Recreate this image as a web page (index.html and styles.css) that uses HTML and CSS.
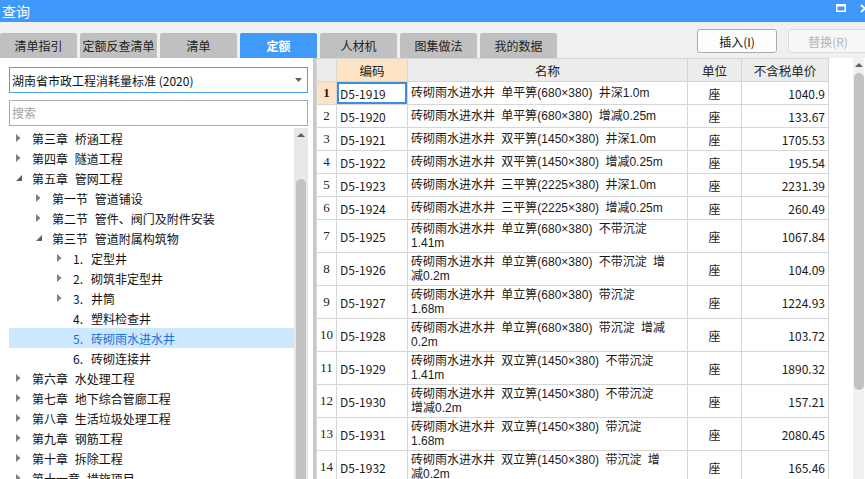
FILE: index.html
```html
<!DOCTYPE html>
<html lang="zh-CN">
<head>
<meta charset="utf-8">
<title>查询</title>
<link rel="stylesheet" href="styles.css">
</head>
<body>
<div class="titlebar">
  <span class="title">查询</span>
  <div class="winbtns">
    <svg width="10" height="8" viewBox="0 0 10 8"><rect x="0.75" y="0.75" width="8.5" height="6.5" fill="none" stroke="#fff" stroke-width="1.5"/><rect x="0" y="0" width="10" height="2.5" fill="#fff"/></svg>
    <svg width="10" height="9" viewBox="0 0 10 9"><path d="M1 1L9 8M9 1L1 8" stroke="#fff" stroke-width="2"/></svg>
  </div>
</div>
<div class="toolbar">
  <div class="tabs">
    <div class="tab">清单指引</div>
    <div class="tab">定额反查清单</div>
    <div class="tab">清单</div>
    <div class="tab active">定额</div>
    <div class="tab">人材机</div>
    <div class="tab">图集做法</div>
    <div class="tab">我的数据</div>
  </div>
  <div class="actions">
    <button class="btn">插入(I)</button>
    <button class="btn disabled">替换(R)</button>
  </div>
</div>
<div class="main">
  <div class="left">
    <div class="select"><span>湖南省市政工程消耗量标准 (2020)</span><svg width="7" height="4" viewBox="0 0 7 4"><path d="M0 0H7L3.5 4Z" fill="#606060"/></svg></div>
    <div class="search">搜索</div>
    <div class="tree-wrap">
      <div class="tree">
        <div class="node"><span class="tw"><svg class="col" width="5" height="8" viewBox="0 0 5 8"><path d="M0 0L4.5 4L0 8Z" fill="#808080"/></svg></span>第三章&nbsp;桥涵工程</div>
        <div class="node"><span class="tw"><svg class="col" width="5" height="8" viewBox="0 0 5 8"><path d="M0 0L4.5 4L0 8Z" fill="#808080"/></svg></span>第四章&nbsp;隧道工程</div>
        <div class="node"><span class="tw"><svg class="exp" width="6" height="6" viewBox="0 0 6 6"><path d="M6 0V6H0Z" fill="#606060"/></svg></span>第五章&nbsp;管网工程</div>
        <div class="node l1"><span class="tw"><svg class="col" width="5" height="8" viewBox="0 0 5 8"><path d="M0 0L4.5 4L0 8Z" fill="#808080"/></svg></span>第一节&nbsp;管道铺设</div>
        <div class="node l1"><span class="tw"><svg class="col" width="5" height="8" viewBox="0 0 5 8"><path d="M0 0L4.5 4L0 8Z" fill="#808080"/></svg></span>第二节&nbsp;管件、阀门及附件安装</div>
        <div class="node l1"><span class="tw"><svg class="exp" width="6" height="6" viewBox="0 0 6 6"><path d="M6 0V6H0Z" fill="#606060"/></svg></span>第三节&nbsp;管道附属构筑物</div>
        <div class="node l2"><span class="tw"><svg class="col" width="5" height="8" viewBox="0 0 5 8"><path d="M0 0L4.5 4L0 8Z" fill="#808080"/></svg></span><span class="no">1.</span>定型井</div>
        <div class="node l2"><span class="tw"><svg class="col" width="5" height="8" viewBox="0 0 5 8"><path d="M0 0L4.5 4L0 8Z" fill="#808080"/></svg></span><span class="no">2.</span>砌筑非定型井</div>
        <div class="node l2"><span class="tw"><svg class="col" width="5" height="8" viewBox="0 0 5 8"><path d="M0 0L4.5 4L0 8Z" fill="#808080"/></svg></span><span class="no">3.</span>井筒</div>
        <div class="node l2"><span class="tw"></span><span class="no">4.</span>塑料检查井</div>
        <div class="node l2 selected"><span class="tw"></span><span class="no">5.</span>砖砌雨水进水井</div>
        <div class="node l2"><span class="tw"></span><span class="no">6.</span>砖砌连接井</div>
        <div class="node"><span class="tw"><svg class="col" width="5" height="8" viewBox="0 0 5 8"><path d="M0 0L4.5 4L0 8Z" fill="#808080"/></svg></span>第六章&nbsp;水处理工程</div>
        <div class="node"><span class="tw"><svg class="col" width="5" height="8" viewBox="0 0 5 8"><path d="M0 0L4.5 4L0 8Z" fill="#808080"/></svg></span>第七章&nbsp;地下综合管廊工程</div>
        <div class="node"><span class="tw"><svg class="col" width="5" height="8" viewBox="0 0 5 8"><path d="M0 0L4.5 4L0 8Z" fill="#808080"/></svg></span>第八章&nbsp;生活垃圾处理工程</div>
        <div class="node"><span class="tw"><svg class="col" width="5" height="8" viewBox="0 0 5 8"><path d="M0 0L4.5 4L0 8Z" fill="#808080"/></svg></span>第九章&nbsp;钢筋工程</div>
        <div class="node"><span class="tw"><svg class="col" width="5" height="8" viewBox="0 0 5 8"><path d="M0 0L4.5 4L0 8Z" fill="#808080"/></svg></span>第十章&nbsp;拆除工程</div>
        <div class="node"><span class="tw"><svg class="col" width="5" height="8" viewBox="0 0 5 8"><path d="M0 0L4.5 4L0 8Z" fill="#808080"/></svg></span>第十一章&nbsp;措施项目</div>
      </div>
      <div class="vbar tree-bar">
        <svg class="up" width="8" height="4" viewBox="0 0 8 4"><path d="M0 4H8L4 0Z" fill="#606060"/></svg>
        <div class="thumb tree-thumb"></div>
      </div>
    </div>
  </div>
  <div class="right">
    <table class="grid">
      <colgroup>
        <col class="c-num"><col class="c-code"><col class="c-name"><col class="c-unit"><col class="c-price">
      </colgroup>
      <thead>
        <tr><th></th><th class="cur">编码</th><th>名称</th><th>单位</th><th>不含税单价</th></tr>
      </thead>
      <tbody>
        <tr class="s"><td class="num sel">1</td><td class="code focus">D5-1919</td><td class="name">砖砌雨水进水井 单平箅(680×380) 井深1.0m</td><td class="unit">座</td><td class="price">1040.9</td></tr>
        <tr class="s"><td class="num">2</td><td class="code">D5-1920</td><td class="name">砖砌雨水进水井 单平箅(680×380) 增减0.25m</td><td class="unit">座</td><td class="price">133.67</td></tr>
        <tr class="s"><td class="num">3</td><td class="code">D5-1921</td><td class="name">砖砌雨水进水井 双平箅(1450×380) 井深1.0m</td><td class="unit">座</td><td class="price">1705.53</td></tr>
        <tr class="s"><td class="num">4</td><td class="code">D5-1922</td><td class="name">砖砌雨水进水井 双平箅(1450×380) 增减0.25m</td><td class="unit">座</td><td class="price">195.54</td></tr>
        <tr class="s"><td class="num">5</td><td class="code">D5-1923</td><td class="name">砖砌雨水进水井 三平箅(2225×380) 井深1.0m</td><td class="unit">座</td><td class="price">2231.39</td></tr>
        <tr class="s"><td class="num">6</td><td class="code">D5-1924</td><td class="name">砖砌雨水进水井 三平箅(2225×380) 增减0.25m</td><td class="unit">座</td><td class="price">260.49</td></tr>
        <tr class="d"><td class="num">7</td><td class="code">D5-1925</td><td class="name">砖砌雨水进水井 单立箅(680×380) 不带沉淀<br>1.41m</td><td class="unit">座</td><td class="price">1067.84</td></tr>
        <tr class="d"><td class="num">8</td><td class="code">D5-1926</td><td class="name">砖砌雨水进水井 单立箅(680×380) 不带沉淀 增<br>减0.2m</td><td class="unit">座</td><td class="price">104.09</td></tr>
        <tr class="d"><td class="num">9</td><td class="code">D5-1927</td><td class="name">砖砌雨水进水井 单立箅(680×380) 带沉淀<br>1.68m</td><td class="unit">座</td><td class="price">1224.93</td></tr>
        <tr class="d"><td class="num">10</td><td class="code">D5-1928</td><td class="name">砖砌雨水进水井 单立箅(680×380) 带沉淀 增减<br>0.2m</td><td class="unit">座</td><td class="price">103.72</td></tr>
        <tr class="d"><td class="num">11</td><td class="code">D5-1929</td><td class="name">砖砌雨水进水井 双立箅(1450×380) 不带沉淀<br>1.41m</td><td class="unit">座</td><td class="price">1890.32</td></tr>
        <tr class="d"><td class="num">12</td><td class="code">D5-1930</td><td class="name">砖砌雨水进水井 双立箅(1450×380) 不带沉淀<br>增减0.2m</td><td class="unit">座</td><td class="price">157.21</td></tr>
        <tr class="d"><td class="num">13</td><td class="code">D5-1931</td><td class="name">砖砌雨水进水井 双立箅(1450×380) 带沉淀<br>1.68m</td><td class="unit">座</td><td class="price">2080.45</td></tr>
        <tr class="d"><td class="num">14</td><td class="code">D5-1932</td><td class="name">砖砌雨水进水井 双立箅(1450×380) 带沉淀 增<br>减0.2m</td><td class="unit">座</td><td class="price">165.46</td></tr>
      </tbody>
    </table>
    <div class="vbar grid-bar">
      <svg class="up" width="8" height="4" viewBox="0 0 8 4"><path d="M0 4H8L4 0Z" fill="#606060"/></svg>
      <div class="thumb grid-thumb"></div>
    </div>
  </div>
</div>
</body>
</html>
```
FILE: styles.css
```css
html, body {
  margin: 0;
  padding: 0;
}
body {
  width: 865px;
  height: 479px;
  overflow: hidden;
  background: #f0f0f0;
  font-family: "Noto Sans CJK SC", "Liberation Sans", sans-serif;
  font-size: 12px;
  color: #1a1a1a;
}

/* title bar */
.titlebar {
  height: 22px;
  background: #4099fa;
  color: #fff;
  display: flex;
  align-items: center;
  justify-content: space-between;
}
.title {
  font-size: 14px;
  line-height: 22px;
  padding-left: 2px;
}
.winbtns {
  display: flex;
  align-items: center;
  gap: 14px;
  margin-right: -5px;
  padding-bottom: 6px;
}
.winbtns svg {
  display: block;
}

/* toolbar with tabs */
.toolbar {
  height: 36px;
  display: flex;
  justify-content: space-between;
}
.tabs {
  display: flex;
  align-items: flex-end;
  gap: 3px;
}
.tab {
  width: 77px;
  height: 25px;
  background: #c0c0c0;
  border-radius: 2px 2px 0 0;
  display: flex;
  align-items: center;
  justify-content: center;
  font-size: 12px;
  color: #222;
}
.tab.active {
  background: #409afa;
  color: #fff;
  font-weight: bold;
}
.actions {
  display: flex;
  align-items: flex-start;
  gap: 11px;
  margin-top: 7px;
  margin-right: -3px;
}
.btn {
  width: 80px;
  height: 24px;
  padding: 0;
  border: 1px solid #acacac;
  border-radius: 3px;
  background: #fdfdfd;
  font-family: inherit;
  font-size: 12px;
  color: #111;
}
.btn.disabled {
  border-color: #dcdcdc;
  background: #f7f7f7;
  color: #b4b4b4;
}

/* main area */
.main {
  display: flex;
  height: 421px;
}
.left {
  flex: none;
  width: 316px;
  box-sizing: border-box;
  background: #fff;
  border-right: 3px solid #c9c9c9;
  padding: 9px 5px 0 9px;
  display: flex;
  flex-direction: column;
}
.select {
  height: 26px;
  box-sizing: border-box;
  border: 1px solid #4a9ef5;
  display: flex;
  align-items: center;
  justify-content: space-between;
  padding: 0 5px 0 2px;
  color: #111;
}
.select svg {
  display: block;
}
.search {
  height: 26px;
  box-sizing: border-box;
  margin-top: 7px;
  border: 1px solid #ababab;
  color: #a3a3a3;
  padding-left: 2px;
  line-height: 24px;
}
.tree-wrap {
  margin-top: 2px;
  flex: 1;
  display: flex;
  overflow: hidden;
}
.tree {
  flex: 1;
  overflow: hidden;
}
.node {
  height: 20px;
  display: flex;
  align-items: center;
  white-space: nowrap;
  font-size: 12px;
  color: #111;
  word-spacing: 4px;
}
.node.l1 {
  padding-left: 20px;
}
.node.l2 {
  padding-left: 41px;
}
.node.selected {
  background: #cce8ff;
  color: #1b6fd8;
}
.tw {
  width: 23px;
  flex: none;
  display: flex;
  align-items: center;
  padding-left: 7px;
  box-sizing: border-box;
}
.tw svg {
  display: block;
}
.no {
  width: 18px;
  flex: none;
}

/* scrollbars */
.vbar {
  display: flex;
  flex-direction: column;
  align-items: center;
  flex: none;
}
.vbar .up {
  display: block;
}
.thumb {
  background: #c2c2c2;
  border-radius: 5px 5px 0 0;
}
.tree-bar {
  width: 14px;
  background: #e8e8e8;
}
.tree-bar .up {
  margin-top: 5px;
}
.tree-thumb {
  width: 10px;
  margin-top: 42px;
  flex: 1;
}
.grid-bar {
  width: 11px;
  margin-left: auto;
  margin-right: 1px;
  background: #f0f0f0;
}
.grid-bar .up {
  margin-top: 5px;
}
.grid-thumb {
  width: 10px;
  height: 317px;
  margin-top: 6px;
  border-radius: 5px;
}

/* grid */
.right {
  flex: 1;
  background: #fff;
  display: flex;
  overflow: hidden;
}
.grid {
  width: 512px;
  flex: none;
  align-self: flex-start;
  border-collapse: collapse;
  table-layout: fixed;
  font-size: 12px;
}
.c-num { width: 20px; }
.c-code { width: 71px; }
.c-name { width: 280px; }
.c-unit { width: 54px; }
.c-price { width: 87px; }
.grid th,
.grid td {
  border: 1px solid #d6d6d6;
  padding: 0;
  white-space: nowrap;
  overflow: hidden;
}
.grid th {
  height: 22px;
  background: #ececec;
  font-weight: normal;
  font-size: 12.5px;
  color: #222;
}
.grid th.cur {
  background: #fde4c4;
}
.grid tr.s td {
  height: 22px;
}
.grid tr.d td {
  height: 32px;
}
.grid td.num {
  text-align: center;
  color: #222;
  font-family: "Liberation Serif", "Noto Sans CJK SC", serif;
  font-size: 13px;
}
.grid td.num.sel {
  background: #fde4c4;
  font-weight: bold;
}
.grid td.code {
  padding-left: 3px;
}
.grid td.focus {
  box-shadow: inset 0 0 0 2px #3b8de2;
}
.grid td.name {
  padding-left: 3px;
  font-family: "Liberation Sans", "Noto Sans CJK SC", sans-serif;
  line-height: 14px;
  word-spacing: 3px;
}
.grid tr.d td.name {
  vertical-align: top;
  padding-top: 2px;
  height: 30px;
}
.grid td.unit {
  text-align: center;
}
.grid td.price {
  text-align: right;
  padding-right: 3px;
}
```
